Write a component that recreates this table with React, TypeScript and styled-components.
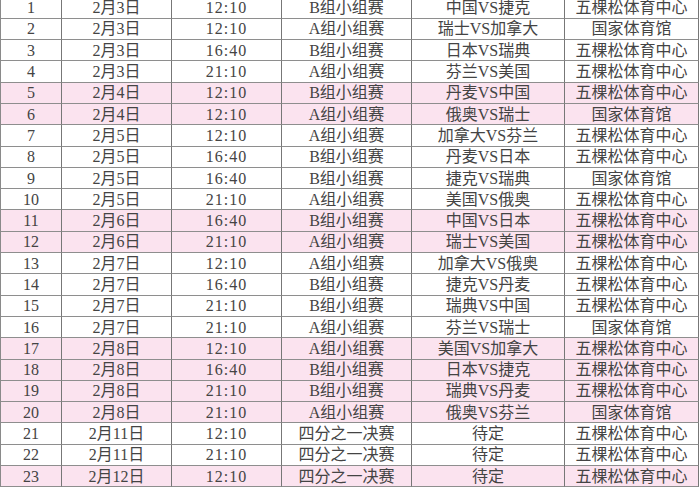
import React from 'react';
import styled, { createGlobalStyle } from 'styled-components';

const GlobalStyle = createGlobalStyle`
  html, body {
    margin: 0;
    padding: 0;
    background: #ffffff;
    overflow: hidden;
  }
`;

type Match = [string, string, string, string, string, string, boolean];

const matches: Match[] = [
  ['1', '2月3日', '12:10', 'B组小组赛', '中国VS捷克', '五棵松体育中心', false],
  ['2', '2月3日', '12:10', 'A组小组赛', '瑞士VS加拿大', '国家体育馆', false],
  ['3', '2月3日', '16:40', 'B组小组赛', '日本VS瑞典', '五棵松体育中心', false],
  ['4', '2月3日', '21:10', 'A组小组赛', '芬兰VS美国', '五棵松体育中心', false],
  ['5', '2月4日', '12:10', 'B组小组赛', '丹麦VS中国', '五棵松体育中心', true],
  ['6', '2月4日', '12:10', 'A组小组赛', '俄奥VS瑞士', '国家体育馆', true],
  ['7', '2月5日', '12:10', 'A组小组赛', '加拿大VS芬兰', '五棵松体育中心', false],
  ['8', '2月5日', '16:40', 'B组小组赛', '丹麦VS日本', '五棵松体育中心', false],
  ['9', '2月5日', '16:40', 'B组小组赛', '捷克VS瑞典', '国家体育馆', false],
  ['10', '2月5日', '21:10', 'A组小组赛', '美国VS俄奥', '五棵松体育中心', false],
  ['11', '2月6日', '16:40', 'B组小组赛', '中国VS日本', '五棵松体育中心', true],
  ['12', '2月6日', '21:10', 'A组小组赛', '瑞士VS美国', '五棵松体育中心', true],
  ['13', '2月7日', '12:10', 'A组小组赛', '加拿大VS俄奥', '五棵松体育中心', false],
  ['14', '2月7日', '16:40', 'B组小组赛', '捷克VS丹麦', '五棵松体育中心', false],
  ['15', '2月7日', '21:10', 'B组小组赛', '瑞典VS中国', '五棵松体育中心', false],
  ['16', '2月7日', '21:10', 'A组小组赛', '芬兰VS瑞士', '国家体育馆', false],
  ['17', '2月8日', '12:10', 'A组小组赛', '美国VS加拿大', '五棵松体育中心', true],
  ['18', '2月8日', '16:40', 'B组小组赛', '日本VS捷克', '五棵松体育中心', true],
  ['19', '2月8日', '21:10', 'B组小组赛', '瑞典VS丹麦', '五棵松体育中心', true],
  ['20', '2月8日', '21:10', 'A组小组赛', '俄奥VS芬兰', '国家体育馆', true],
  ['21', '2月11日', '12:10', '四分之一决赛', '待定', '五棵松体育中心', false],
  ['22', '2月11日', '21:10', '四分之一决赛', '待定', '五棵松体育中心', false],
  ['23', '2月12日', '12:10', '四分之一决赛', '待定', '五棵松体育中心', true],
];

const Sheet = styled.div`
  display: grid;
  grid-template-columns: 61px 110px 110px 130px 153px 134px;
  grid-auto-rows: 21.3px;
  width: 698px;
  margin-top: -2.5px;
  border-left: 1px solid #8a8a8a;
  font-family: 'Liberation Serif', 'Noto Sans CJK SC', serif;
  font-size: 16px;
  color: #444444;
`;

const Cell = styled.div<{ $pink: boolean; $spaced?: boolean }>`
  display: flex;
  align-items: center;
  justify-content: center;
  box-sizing: border-box;
  background: ${(p) => (p.$pink ? '#fbe3ef' : '#ffffff')};
  border-right: 1px solid #777777;
  border-bottom: 1px solid #8e8e8e;
  white-space: nowrap;
  line-height: 1;
  padding-top: 1px;
  letter-spacing: ${(p) => (p.$spaced ? '1px' : '0')};
`;

const App: React.FC = () => {
  return (
    <>
      <GlobalStyle />
      <Sheet>
        {matches.map((row) =>
          row.slice(0, 6).map((value, i) => (
            <Cell key={`${row[0]}-${i}`} $pink={row[6] as boolean} $spaced={i === 2}>
              {value as string}
            </Cell>
          ))
        )}
      </Sheet>
    </>
  );
};

export default App;
